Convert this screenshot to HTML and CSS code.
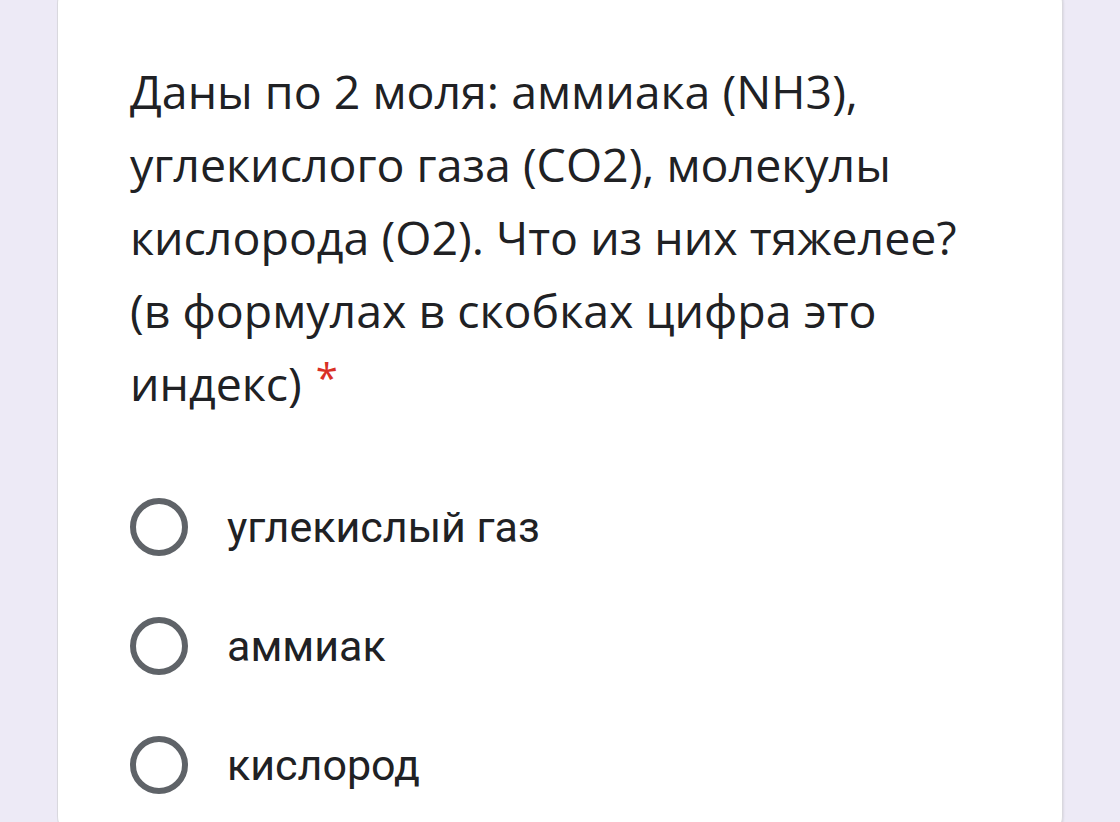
FILE: index.html
```html
<!DOCTYPE html>
<html lang="ru">
<head>
<meta charset="utf-8">
<link rel="stylesheet" href="styles.css">
</head>
<body>
<div class="page">
  <div class="card">
    <div class="question">Даны по 2 моля: аммиака (NH3), углекислого газа (CO2), молекулы кислорода (O2). Что из них тяжелее? (в формулах в скобках цифра это индекс)<span class="req">*</span></div>
    <div class="options">
      <div class="option"><span class="radio"></span><span class="label">углекислый газ</span></div>
      <div class="option"><span class="radio"></span><span class="label">аммиак</span></div>
      <div class="option"><span class="radio"></span><span class="label">кислород</span></div>
    </div>
  </div>
</div>
</body>
</html>
```
FILE: styles.css
```css
html, body {
  margin: 0;
  padding: 0;
  height: 100%;
  overflow: hidden;
}
body {
  background: #edeaf6;
}
.page {
  padding: 0 57px;
  height: 100%;
}
.card {
  margin-top: -20px;
  height: 860px;
  background: #fff;
  border: 1px solid #d9d8de;
  border-top: none;
  border-radius: 24px;
  box-shadow: 1px 0 2px rgba(0,0,0,0.08);
  padding: 75px 72px 0 72px;
  box-sizing: border-box;
}
.question {
  font-family: "Open Sans", sans-serif;
  font-size: 46.5px;
  line-height: 73px;
  color: #202124;
}
.req {
  display: inline-block;
  margin-left: 14px;
  color: #d93025;
  font-size: 40px;
  line-height: 1;
  vertical-align: 8px;
}
.options {
  margin-top: 78px;
  display: flex;
  flex-direction: column;
  gap: 61px;
}
.option {
  display: flex;
  align-items: center;
  height: 58px;
}
.radio {
  width: 46px;
  height: 46px;
  border: 6px solid #5f6368;
  border-radius: 50%;
  flex: none;
}
.label {
  margin-left: 39px;
  font-family: Roboto, sans-serif;
  font-size: 43px;
  color: #202124;
}
```
